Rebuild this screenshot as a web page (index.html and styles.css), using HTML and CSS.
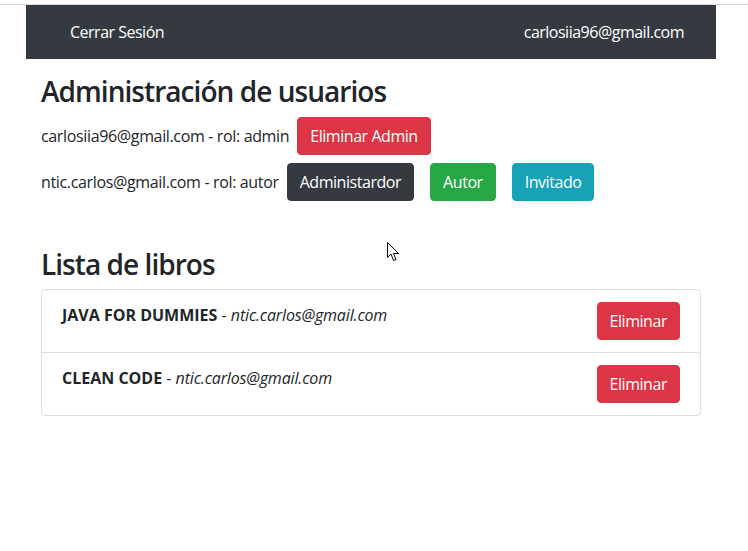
FILE: index.html
```html
<!DOCTYPE html>
<html lang="es">
<head>
<meta charset="utf-8">
<title>Administración</title>
<link rel="stylesheet" href="styles.css">
</head>
<body>
<div class="topline"></div>
<div class="container">
  <nav class="navbar">
    <a class="nav-link" href="#">Cerrar Sesión</a>
    <span class="nav-link">carlosiia96@gmail.com</span>
  </nav>
  <div class="content">
    <h3 class="title">Administración de usuarios</h3>
    <div class="user-row">
      <span class="user-text">carlosiia96@gmail.com - rol: admin</span>
      <button class="btn btn-danger">Eliminar Admin</button>
    </div>
    <div class="user-row">
      <span class="user-text">ntic.carlos@gmail.com - rol: autor</span>
      <button class="btn btn-dark">Administardor</button>
      <button class="btn btn-success">Autor</button>
      <button class="btn btn-info">Invitado</button>
    </div>
    <h3 class="title title-books">Lista de libros</h3>
    <ul class="list-group">
      <li class="list-item">
        <span class="book"><b>JAVA FOR DUMMIES</b> - <i>ntic.carlos@gmail.com</i></span>
        <button class="btn btn-danger">Eliminar</button>
      </li>
      <li class="list-item">
        <span class="book"><b>CLEAN CODE</b> - <i>ntic.carlos@gmail.com</i></span>
        <button class="btn btn-danger">Eliminar</button>
      </li>
    </ul>
  </div>
</div>
<svg class="cursor" width="13" height="20" viewBox="0 0 13 20" xmlns="http://www.w3.org/2000/svg">
  <path d="M0.5 0.5 L0.5 15.5 L4 12 L6.5 18.5 L9 17.5 L6.5 11.5 L11.5 11.5 Z" fill="#fff" stroke="#000" stroke-width="1" stroke-linejoin="miter"/>
</svg>
</body>
</html>
```
FILE: styles.css
```css
* { box-sizing: border-box; }
html, body { margin: 0; padding: 0; background: #fff; }
body {
  font-family: "Open Sans", "Noto Sans", sans-serif;
  font-size: 16px;
  line-height: 1.5;
  color: #212529;
  letter-spacing: -0.35px;
  position: relative;
}
.topline {
  height: 5px;
  border-bottom: 1px solid #d9d9df;
}
.container {
  width: 690px;
  margin-left: 26px;
}
.navbar {
  background: #343a40;
  height: 54px;
  display: flex;
  align-items: center;
  justify-content: space-between;
  padding: 0 32px 0 44px;
}
.nav-link {
  color: #fff;
  text-decoration: none;
  font-size: 16px;
  line-height: 24px;
  letter-spacing: -0.5px;
}
.content {
  padding: 0 15px;
}
.title {
  font-size: 28px;
  font-weight: 600;
  line-height: 1.2;
  letter-spacing: -0.95px;
  margin: 16px 0 8px;
}
.title-books {
  margin-top: 47px;
}
.user-row {
  display: flex;
  align-items: center;
  margin-bottom: 8px;
}
.user-text {
  margin-right: 8px;
}
.user-row .btn + .btn {
  margin-left: 16px;
}
.btn {
  font-family: inherit;
  font-size: 16px;
  line-height: 24px;
  letter-spacing: -0.45px;
  padding: 6px 12px;
  border: 1px solid transparent;
  border-radius: 4px;
  color: #fff;
  cursor: pointer;
}
.btn-danger { background: #dc3545; border-color: #dc3545; }
.btn-dark { background: #343a40; border-color: #343a40; }
.btn-success { background: #28a745; border-color: #28a745; }
.btn-info { background: #17a2b8; border-color: #17a2b8; }
.list-group {
  list-style: none;
  margin: 0;
  padding: 0;
  border: 1px solid rgba(0,0,0,.125);
  border-radius: 4px;
}
.list-item {
  display: flex;
  justify-content: space-between;
  align-items: flex-start;
  padding: 12px 20px;
}
.list-item + .list-item {
  border-top: 1px solid rgba(0,0,0,.125);
}
.book {
  padding-top: 1px;
  letter-spacing: 0;
}
.book i {
  letter-spacing: -0.15px;
}
.cursor {
  position: absolute;
  left: 387px;
  top: 242px;
}
```
